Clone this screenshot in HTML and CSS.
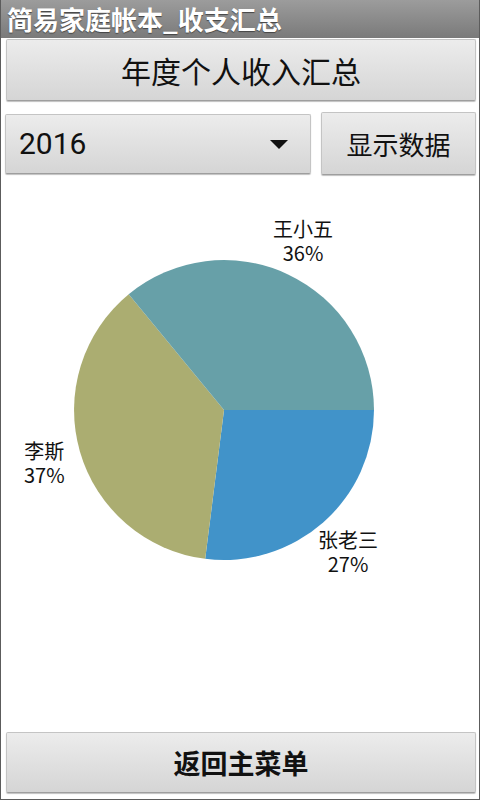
FILE: index.html
```html
<!DOCTYPE html>
<html lang="zh-CN">
<head>
<meta charset="utf-8">
<title>简易家庭帐本_收支汇总</title>
<link rel="stylesheet" href="styles.css">
</head>
<body>
<div class="screen">
  <div class="titlebar">简易家庭帐本_收支汇总</div>
  <div class="content">
    <button class="btn btn-wide btn-top">年度个人收入汇总</button>
    <div class="row">
      <div class="btn spinner">
        <span class="spinner-text">2016</span>
        <svg class="arrow" width="18" height="10" viewBox="0 0 18 10"><polygon points="0,0 18,0 9,9" fill="#111"/></svg>
      </div>
      <button class="btn btn-show">显示数据</button>
    </div>
    <div class="chart">
      <svg class="pie" width="470" height="540" viewBox="0 0 470 540">
        <path d="M219,235 L369,235 A150,150 0 0 1 200.2,383.8 Z" fill="#4193c9"/>
        <path d="M219,235 L200.2,383.8 A150,150 0 0 1 123.7,119.2 Z" fill="#abad71"/>
        <path d="M219,235 L123.7,119.2 A150,150 0 0 1 369,235 Z" fill="#67a0a8"/>
      </svg>
      <div class="label l1"><div>王小五</div><div>36%</div></div>
      <div class="label l2"><div>李斯</div><div>37%</div></div>
      <div class="label l3"><div>张老三</div><div>27%</div></div>
    </div>
    <button class="btn btn-wide btn-back">返回主菜单</button>
  </div>
</div>
</body>
</html>
```

FILE: styles.css
```css
* { box-sizing: border-box; }
html, body { margin: 0; padding: 0; }
body {
  width: 480px;
  height: 800px;
  background: #fff;
  font-family: "Noto Sans CJK SC", "Noto Sans", sans-serif;
}
.screen {
  width: 480px;
  height: 800px;
  border-left: 1px solid #5c5c5c;
  border-right: 1px solid #5c5c5c;
  border-bottom: 1px solid #5c5c5c;
  display: flex;
  flex-direction: column;
}
.titlebar {
  height: 38px;
  background: linear-gradient(#9c9c9c, #7a7a7a);
  color: #fff;
  font-size: 26px;
  font-weight: 700;
  line-height: 38px;
  padding-left: 6px;
  text-shadow: 0 1px 1px #444;
  white-space: nowrap;
}
.content {
  flex: 1;
  display: flex;
  flex-direction: column;
  padding: 1px 3px 6px 4px;
}
.btn {
  font-family: "Noto Sans CJK SC", "Noto Sans", sans-serif;
  background: linear-gradient(#ececec, #d5d5d5);
  border: 1px solid #c4c4c4;
  border-bottom-color: #9e9e9e;
  border-radius: 2px;
  box-shadow: 0 1px 1px rgba(0,0,0,0.25);
  color: #111;
  padding: 0;
  margin: 0;
}
.btn-wide {
  height: 62px;
  margin-left: 1px;
  width: 470px;
}
.btn-top { font-size: 30px; }
.row {
  display: flex;
  margin-top: 11px;
  gap: 10px;
  align-items: center;
}
.spinner {
  width: 306px;
  height: 60px;
  display: flex;
  align-items: center;
  justify-content: space-between;
  padding: 0 22px 0 13px;
}
.spinner-text {
  font-family: "Roboto", "Noto Sans", sans-serif;
  font-size: 30px;
}
.arrow { display: block; margin-top: 2px; }
.btn-show {
  width: 155px;
  height: 63px;
  font-size: 26px;
}
.chart {
  position: relative;
  flex: 1;
}
.pie { position: absolute; left: 0; top: 0; }
.label {
  position: absolute;
  font-size: 20px;
  line-height: 24px;
  text-align: center;
  color: #111;
}
.l1 { left: 268px; top: 42px; }
.l2 { left: 19px; top: 264px; }
.l3 { left: 313px; top: 353px; }
.btn-back {
  font-weight: 700;
  font-size: 27px;
  height: 61px;
}
```
